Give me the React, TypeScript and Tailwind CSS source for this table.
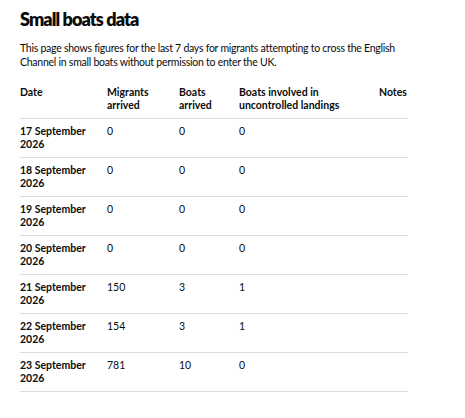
const rows = [
  { date: "17 September 2026", migrants: "0", boats: "0", uncontrolled: "0" },
  { date: "18 September 2026", migrants: "0", boats: "0", uncontrolled: "0" },
  { date: "19 September 2026", migrants: "0", boats: "0", uncontrolled: "0" },
  { date: "20 September 2026", migrants: "0", boats: "0", uncontrolled: "0" },
  { date: "21 September 2026", migrants: "150", boats: "3", uncontrolled: "1" },
  { date: "22 September 2026", migrants: "154", boats: "3", uncontrolled: "1" },
  { date: "23 September 2026", migrants: "781", boats: "10", uncontrolled: "0" },
];

export default function App() {
  return (
    <div className="min-h-screen bg-white pl-[20px] pt-[7px] text-[#0b0c0c] [font-family:Lato,sans-serif]">
      <h1 className="text-[18px] font-extrabold leading-[24px] tracking-[-0.9px]">Small boats data</h1>
      <p className="mt-[10px] w-[395px] text-[10.5px] leading-[14px] tracking-[-0.25px]">
        This page shows figures for the last 7 days for migrants attempting to cross the English
        Channel in small boats without permission to enter the UK.
      </p>

      <table className="mt-[11px] w-[388px] table-fixed border-collapse text-[10.5px] leading-[13px]">
        <colgroup>
          <col className="w-[87px]" />
          <col className="w-[72px]" />
          <col className="w-[60px]" />
          <col className="w-[140px]" />
          <col className="w-[29px]" />
        </colgroup>
        <thead>
          <tr className="border-b border-[#dcdcdc] text-left align-top">
            <th className="py-[6px] pr-[8px] font-bold">Date</th>
            <th className="py-[6px] pr-[8px] font-bold">Migrants arrived</th>
            <th className="py-[6px] pr-[8px] font-bold">Boats arrived</th>
            <th className="py-[6px] pr-[8px] font-bold">Boats involved in uncontrolled landings</th>
            <th className="py-[6px] font-bold">Notes</th>
          </tr>
        </thead>
        <tbody>
          {rows.map((row) => (
            <tr key={row.date} className="border-b border-[#dcdcdc] align-top">
              <th className="py-[6px] pr-[8px] text-left font-bold">{row.date}</th>
              <td className="py-[6px] pr-[8px]">{row.migrants}</td>
              <td className="py-[6px] pr-[8px]">{row.boats}</td>
              <td className="py-[6px] pr-[8px]">{row.uncontrolled}</td>
              <td className="py-[6px]"></td>
            </tr>
          ))}
        </tbody>
      </table>
    </div>
  );
}
